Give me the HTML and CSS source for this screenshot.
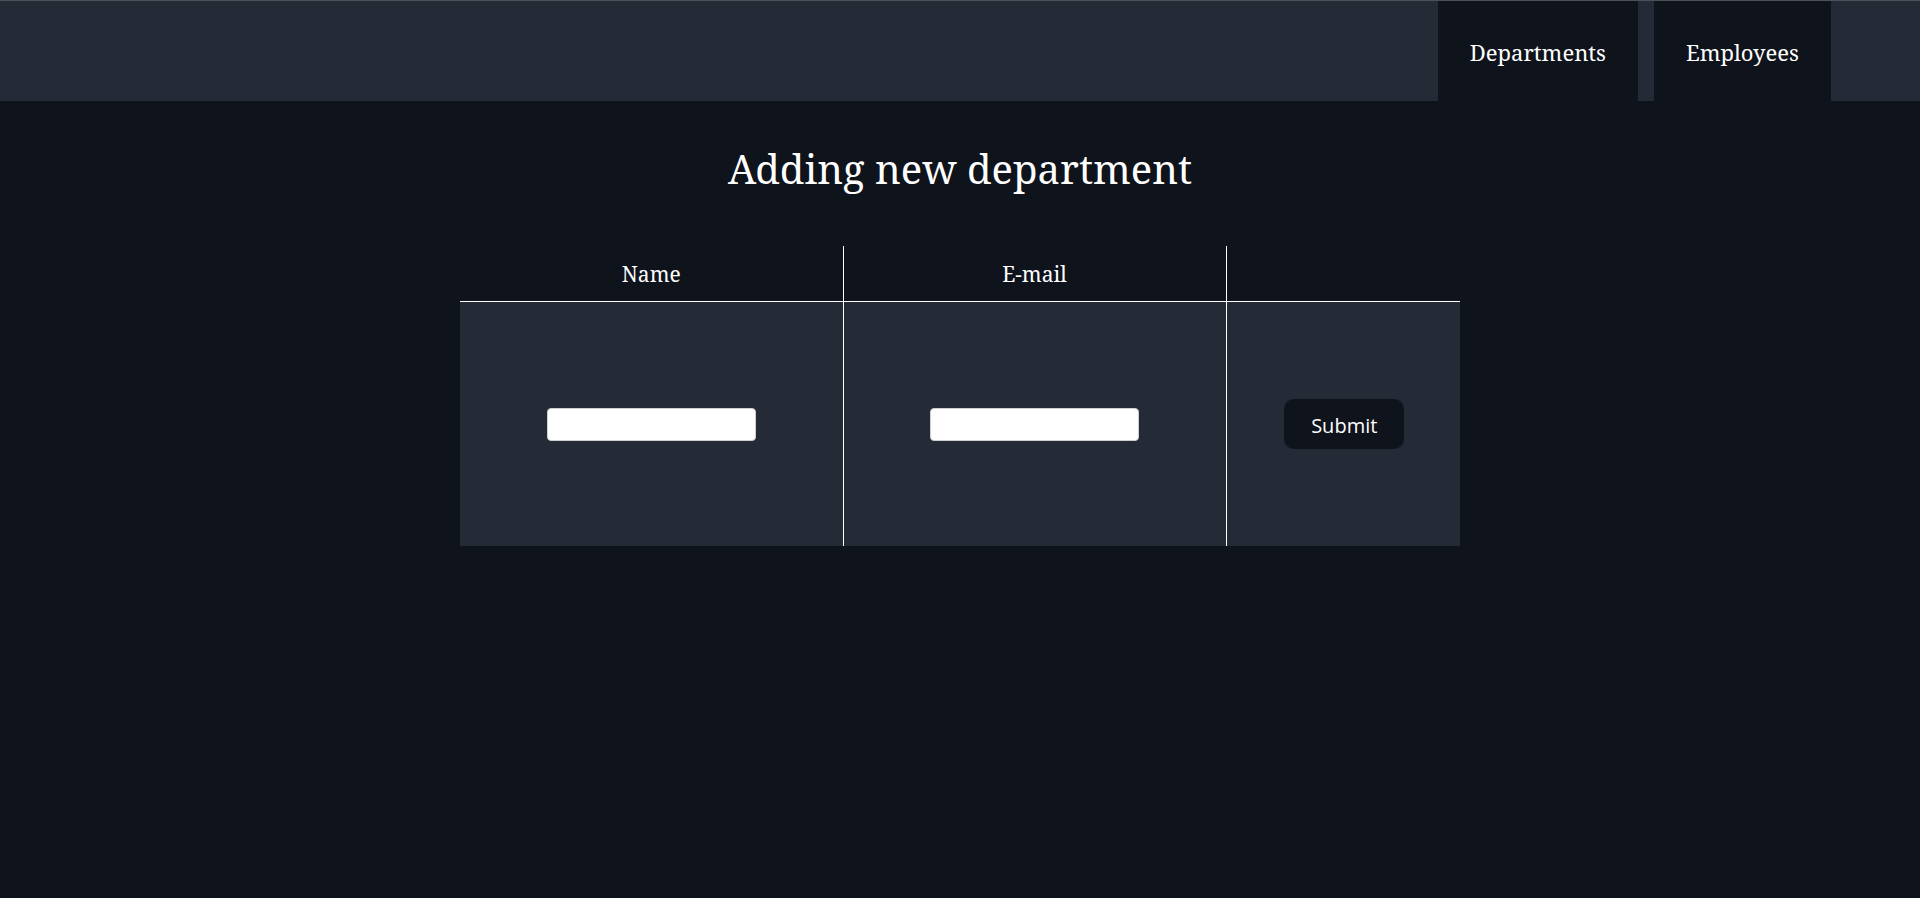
FILE: index.html
```html
<!DOCTYPE html>
<html lang="en">
<head>
<meta charset="utf-8">
<title>Adding new department</title>
<link rel="stylesheet" href="styles.css">
</head>
<body>
<header class="topbar">
  <nav class="nav">
    <a class="nav-link" href="#">Departments</a>
    <a class="nav-link" href="#">Employees</a>
  </nav>
</header>
<main class="content">
  <h1 class="title">Adding new department</h1>
  <form class="form" onsubmit="return false">
    <table class="grid">
      <colgroup>
        <col class="col-name">
        <col class="col-mail">
        <col class="col-act">
      </colgroup>
      <thead>
        <tr>
          <th class="head-cell">Name</th>
          <th class="head-cell">E-mail</th>
          <th class="head-cell"></th>
        </tr>
      </thead>
      <tbody>
        <tr class="body-row">
          <td class="cell"><input class="field" type="text"></td>
          <td class="cell"><input class="field" type="text"></td>
          <td class="cell"><button class="submit" type="submit">Submit</button></td>
        </tr>
      </tbody>
    </table>
  </form>
</main>
</body>
</html>
```
FILE: styles.css
```css
html, body {
  margin: 0;
  padding: 0;
}
body {
  background: #0f131c;
  color: #ffffff;
  font-family: "Noto Serif", "DejaVu Serif", "Liberation Serif", serif;
  min-height: 898px;
}
.topbar {
  border-top: 1px solid #4d5057;
  background: #242a36;
  height: 100px;
  display: flex;
  justify-content: flex-end;
}
.nav {
  display: flex;
  gap: 16px;
  padding-right: 89px;
}
.nav-link {
  display: flex;
  align-items: center;
  padding: 2px 32px 0;
  background: #0f131c;
  color: #ffffff;
  text-decoration: none;
  font-size: 22px;
}
.content {
  display: flex;
  flex-direction: column;
  align-items: center;
}
.title {
  margin: 43px 0 52px;
  font-size: 40px;
  line-height: 50px;
  font-weight: 400;
}
.grid {
  width: 1000px;
  border-collapse: collapse;
  table-layout: fixed;
}
.col-name { width: 383px; }
.col-mail { width: 383px; }
.col-act { width: 234px; }
.head-cell {
  height: 55px;
  padding: 0;
  font-weight: 400;
  font-size: 21px;
  border-bottom: 1px solid #ffffff;
  border-right: 1px solid #ffffff;
  text-align: center;
  vertical-align: middle;
}
.head-cell:last-child, .cell:last-child {
  border-right: none;
}
.body-row {
  background: #242a36;
}
.cell {
  height: 244px;
  padding: 0;
  border-right: 1px solid #ffffff;
  text-align: center;
  vertical-align: middle;
}
.cell:last-child {
  padding-left: 2px;
}
.field {
  box-sizing: border-box;
  width: 209px;
  height: 33px;
  border: 1px solid #cfcfcf;
  border-radius: 4px;
  background: #ffffff;
  padding: 0 6px;
  vertical-align: middle;
}
.submit {
  box-sizing: border-box;
  width: 120px;
  height: 50px;
  padding: 2px 0 0;
  border: none;
  border-radius: 10px;
  background: #0f131c;
  color: #ffffff;
  font-family: "Open Sans", "Noto Sans", sans-serif;
  font-size: 20px;
  cursor: pointer;
  vertical-align: middle;
}
```
